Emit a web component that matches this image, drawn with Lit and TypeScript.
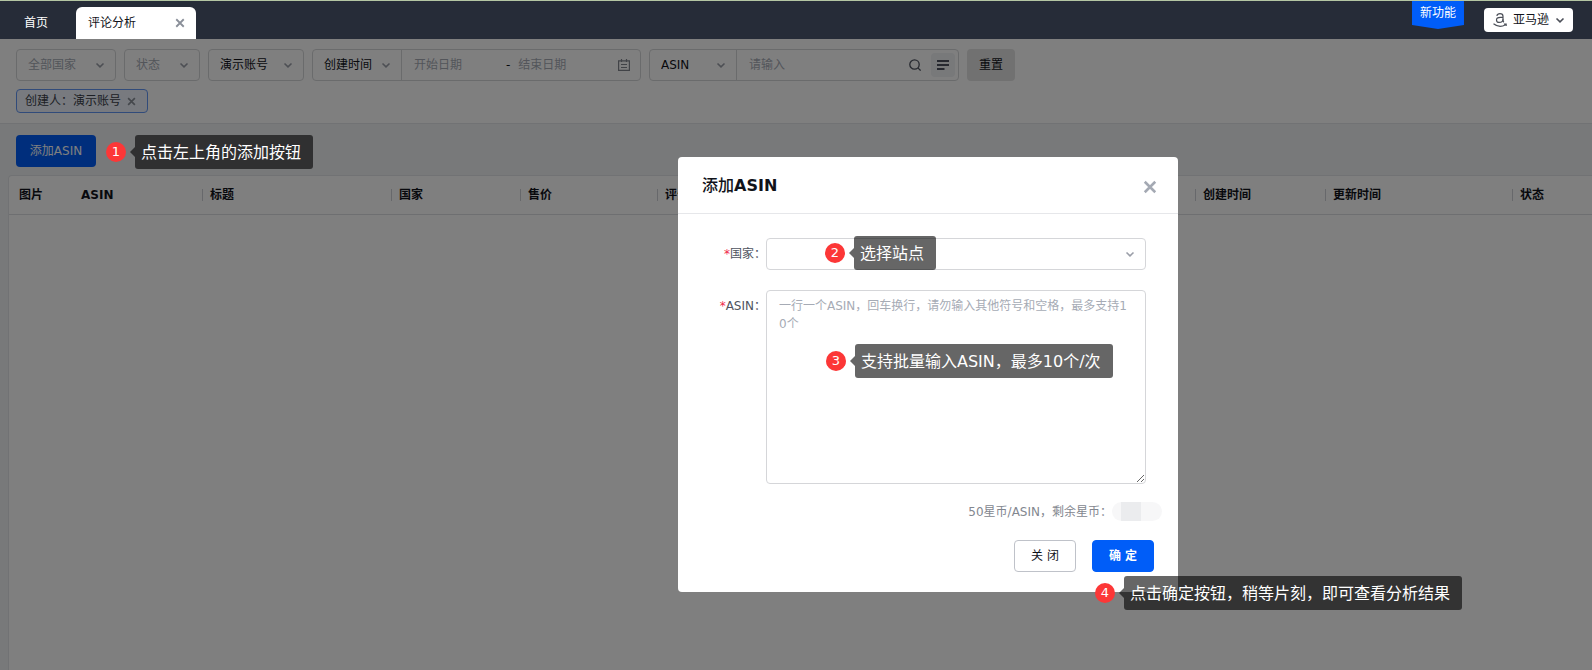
import { LitElement, html, css, svg } from "lit";
import { customElement, property } from "lit/decorators.js";

const chevron = html`<svg class="chevron" viewBox="0 0 10 10" aria-hidden="true">
  <path d="M1.5 3.5 5 6.8 8.5 3.5" fill="none" stroke="currentColor" stroke-width="1.6" />
</svg>`;

const cross = svg`<path d="M1.5 1.5 10.5 10.5M10.5 1.5 1.5 10.5" fill="none" stroke="currentColor" />`;

const columns = [
  { label: "图片", cls: "c-image plain" },
  { label: "ASIN", cls: "c-asin plain" },
  { label: "标题", cls: "c-title" },
  { label: "国家", cls: "c-country" },
  { label: "售价", cls: "c-price" },
  { label: "评分", cls: "c-rating" },
  { label: "创建时间", cls: "c-created" },
  { label: "更新时间", cls: "c-updated" },
  { label: "状态", cls: "c-status" },
];

@customElement("step-callout")
export class StepCallout extends LitElement {
  @property({ type: Number }) step = 1;

  static styles = css`
    :host {
      display: flex;
      align-items: center;
      gap: 4px;
      white-space: nowrap;
      color: #fff;
    }
    .number {
      width: 20px;
      height: 20px;
      border-radius: 50%;
      background: #fc3737;
      font-size: 13px;
      line-height: 20px;
      text-align: center;
    }
    .body {
      display: flex;
      align-items: center;
    }
    .arrow {
      width: 5px;
      height: 10px;
      background: rgba(0, 0, 0, 0.6);
      clip-path: polygon(0 50%, 100% 0, 100% 100%);
    }
    .text {
      padding: 2px 12px 0 6px;
      border-radius: 3px;
      background: rgba(0, 0, 0, 0.6);
      font-size: 16px;
      line-height: 32px;
    }
  `;

  render() {
    return html`
      <span class="number">${this.step}</span>
      <span class="body"><span class="arrow"></span><span class="text"><slot></slot></span></span>
    `;
  }
}

@customElement("app-root")
export class AppRoot extends LitElement {
  static styles = css`
    :host {
      display: flex;
      flex-direction: column;
      min-height: 100vh;
      font-family: "DejaVu Sans", "Noto Sans CJK SC", sans-serif;
      font-size: 12px;
      line-height: 18px;
      color: #11131a;
      overflow: hidden;
    }
    *,
    *::before {
      box-sizing: border-box;
    }
    button,
    input,
    select,
    textarea {
      margin: 0;
      padding: 0;
      border: 0;
      background: none;
      font: inherit;
      color: inherit;
      outline: none;
    }
    button,
    select {
      cursor: pointer;
    }
    select {
      appearance: none;
    }
    ::placeholder {
      color: #a6abb5;
      opacity: 1;
    }
    svg {
      display: block;
    }

    .topbar {
      display: flex;
      align-items: flex-end;
      height: 39px;
      border-top: 1px solid #b4c6a3;
      background: #262c38;
    }
    .home {
      padding: 0 28px 0 24px;
      line-height: 32px;
      color: #fff;
      text-decoration: none;
    }
    .tab {
      display: flex;
      align-items: center;
      justify-content: space-between;
      width: 120px;
      height: 32px;
      padding: 0 10px 0 12px;
      border-radius: 6px 6px 0 0;
      background: #fff;
    }
    .tab-close {
      color: #8a8f99;
    }
    .tab-close svg {
      width: 12px;
      height: 12px;
      padding: 1px;
      stroke-width: 2.2;
    }
    .top-actions {
      display: flex;
      align-self: flex-start;
      gap: 20px;
      margin-left: auto;
      padding-right: 19px;
    }
    .new-flag {
      width: 52px;
      height: 28px;
      background: #005df8;
      clip-path: polygon(0 0, 100% 0, 100% 86%, 50% 100%, 0 86%);
      color: #fff;
      line-height: 24px;
      text-align: center;
    }
    .market {
      display: flex;
      align-items: center;
      gap: 6px;
      height: 24px;
      margin-top: 7px;
      padding: 0 8px 0 9px;
      border-radius: 4px;
      background: #fff;
    }
    .market-logo {
      width: 14px;
      height: 14px;
      color: #4b4f58;
    }
    .market .chevron {
      width: 10px;
      height: 10px;
      color: #4b4f58;
    }

    .main {
      position: relative;
      flex: 1;
      display: flex;
      flex-direction: column;
      background: #f0f2f5;
    }
    .filters {
      display: flex;
      flex-direction: column;
      align-items: flex-start;
      gap: 8px;
      padding: 10px 16px;
      border-bottom: 1px solid #e2e4e8;
      background: #fff;
    }
    .filter-row {
      display: flex;
      gap: 8px;
    }
    .box {
      display: flex;
      height: 32px;
      border: 1px solid #d5d6d9;
      border-radius: 4px;
      background: #fff;
    }
    .pick {
      display: grid;
      align-items: center;
    }
    .pick select,
    .pick .chevron {
      grid-area: 1 / 1;
    }
    .pick select {
      width: 100%;
      height: 100%;
      padding: 0 11px;
    }
    .chevron {
      width: 10px;
      height: 10px;
      color: #9a9ea8;
    }
    .pick .chevron {
      justify-self: end;
      margin-right: 10px;
      pointer-events: none;
    }
    .muted {
      color: #a6abb5;
    }
    .w-country {
      width: 100px;
    }
    .w-status {
      width: 76px;
    }
    .w-account {
      width: 96px;
    }
    .w-time {
      width: 89px;
      border-right: 1px solid #d5d6d9;
    }
    .w-field {
      width: 87px;
      border-right: 1px solid #d5d6d9;
    }
    .dates,
    .search {
      display: flex;
      align-items: center;
    }
    .dates {
      width: 238px;
      gap: 8px;
      padding: 0 10px 0 12px;
    }
    .dates input {
      width: 84px;
    }
    .dates input + span + input {
      flex: 1;
      min-width: 0;
    }
    .calendar {
      width: 12px;
      height: 12px;
      color: #83878f;
    }
    .search {
      width: 221px;
      gap: 10px;
      padding: 0 3px 0 12px;
    }
    .search input {
      flex: 1;
      min-width: 0;
    }
    .search-icon {
      width: 12px;
      height: 12px;
      color: #4e5360;
    }
    .multi {
      display: grid;
      place-items: center;
      width: 24px;
      height: 24px;
      border-radius: 4px;
      background: #f0f2f5;
      color: #4e5360;
    }
    .multi svg {
      width: 12px;
      height: 12px;
    }
    .reset {
      width: 48px;
      height: 32px;
      border-radius: 4px;
      background: #e3e3e3;
    }
    .tag {
      display: flex;
      align-items: center;
      gap: 6px;
      height: 24px;
      padding: 0 11px 0 8px;
      border: 1px solid #6397f5;
      border-radius: 4px;
      background: #f0f5ff;
      color: #3b3f4a;
    }
    .tag-close {
      color: #8a8f99;
    }
    .tag-close svg {
      width: 9px;
      height: 9px;
      stroke-width: 2.2;
    }

    .toolbar {
      display: flex;
      align-items: flex-start;
      gap: 10px;
      padding: 11px 16px 6px;
    }
    .toolbar step-callout {
      position: relative;
      z-index: 2;
    }
    .add {
      width: 80px;
      height: 32px;
      border-radius: 4px;
      background: #005df8;
      color: #fff;
    }
    .list {
      flex: 1;
      margin-left: 8px;
      border: 1px solid #e2e4e8;
      border-width: 1px 0 0 1px;
      border-radius: 4px 0 0 0;
      background: #fff;
    }
    table {
      width: 100%;
      table-layout: fixed;
      border-collapse: collapse;
    }
    th {
      height: 38px;
      padding: 0 8px;
      border-bottom: 1px solid #dcdee2;
      background: linear-gradient(#cfd1d6, #cfd1d6) left center / 1px 12px no-repeat;
      font-weight: 700;
      text-align: left;
      white-space: nowrap;
    }
    th.plain {
      padding: 0 10px;
      background: none;
    }
    .c-image {
      width: 62px;
    }
    .c-asin {
      width: 131px;
    }
    .c-title {
      width: 189px;
    }
    .c-country {
      width: 129px;
    }
    .c-price {
      width: 137px;
    }
    .c-created {
      width: 130px;
    }
    .c-updated {
      width: 187px;
    }
    .c-status {
      width: 80px;
    }

    .overlay {
      position: absolute;
      inset: 0;
      z-index: 1;
      display: flex;
      align-items: flex-start;
      justify-content: center;
      padding: 118px 0 0 264px;
      background: rgba(0, 0, 0, 0.5);
    }
    .dialog {
      position: relative;
      width: 500px;
      border-radius: 4px;
      background: #fff;
    }
    .dialog-head {
      display: flex;
      align-items: center;
      justify-content: space-between;
      height: 57px;
      padding: 2px 21px 0 24px;
      border-bottom: 1px solid #e6e7ea;
    }
    h2 {
      margin: 0;
      font-size: 16px;
      line-height: 24px;
      font-weight: 500;
    }
    h2 b {
      font-weight: 700;
    }
    .dialog-close {
      padding-top: 2px;
      color: #a4a9b3;
    }
    .dialog-close svg {
      width: 14px;
      height: 14px;
      stroke-width: 2.2;
    }
    .form {
      display: grid;
      grid-template-columns: 64px 1fr;
      row-gap: 20px;
      padding: 24px 32px 0 24px;
    }
    .form label {
      line-height: 32px;
      text-align: right;
      white-space: nowrap;
      color: #4e5360;
    }
    .required {
      color: #f0284a;
    }
    .field {
      position: relative;
    }
    .field .pick {
      width: 100%;
    }
    .area {
      display: block;
      width: 100%;
      height: 194px;
      padding: 6px 12px;
      border: 1px solid #d5d6d9;
      border-radius: 4px;
      background: #fff;
      word-break: break-all;
      resize: vertical;
    }
    .at-select,
    .at-area,
    .at-confirm {
      position: absolute;
      z-index: 2;
    }
    .at-select {
      top: -2px;
      left: 59px;
    }
    .at-area {
      top: 54px;
      left: 60px;
    }
    .at-confirm {
      top: 419px;
      left: 417px;
    }
    .cost {
      display: flex;
      align-items: center;
      justify-content: flex-end;
      margin: 0;
      padding: 18px 16px 0 24px;
      color: #83878f;
    }
    .balance {
      width: 50px;
      height: 19px;
      border-radius: 10px;
      background: linear-gradient(90deg, #f7f7f8 18%, #ebecee 18%, #ebecee 58%, #f7f7f8 58%);
    }
    .dialog-foot {
      display: flex;
      justify-content: flex-end;
      gap: 16px;
      padding: 19px 24px 20px;
    }
    .btn {
      width: 62px;
      height: 32px;
      border: 1px solid #bfc2c9;
      border-radius: 4px;
    }
    .btn.primary {
      border-color: #005df8;
      background: #005df8;
      color: #fff;
      font-weight: 700;
    }
  `;

  render() {
    return html`
      <header class="topbar" lang="zh-CN">
        <a class="home" href="#">首页</a>
        <div class="tab">
          <span>评论分析</span>
          <button class="tab-close" aria-label="关闭标签"><svg viewBox="0 0 12 12">${cross}</svg></button>
        </div>
        <div class="top-actions">
          <span class="new-flag">新功能</span>
          <button class="market">
            <svg class="market-logo" viewBox="0 0 14 14" fill="none" stroke="currentColor" stroke-width="1.2">
              <path d="M3.800 2.800C4.200 1.300 5.400.7 7 .7c2 0 3 1 3 2.600V7.200c0 1 .3 1.500.9 2" />
              <path d="M10 4.400H7.300C4.900 4.400 3.500 5.200 3.500 6.900 3.500 8.400 4.500 9.400 6.100 9.400 8.400 9.400 10 8.200 10 6.200" />
              <path d="M.5 10.800C4.200 13.800 9 13.900 12.600 11.800M10.900 11h2.300v2" stroke-width="1.1" />
            </svg>
            <span>亚马逊</span>
            ${chevron}
          </button>
        </div>
      </header>

      <main class="main" lang="zh-CN">
        <section class="filters">
          <div class="filter-row">
            <div class="box pick w-country muted">
              <select aria-label="国家"><option>全部国家</option></select>${chevron}
            </div>
            <div class="box pick w-status muted">
              <select aria-label="状态"><option>状态</option></select>${chevron}
            </div>
            <div class="box pick w-account">
              <select aria-label="账号"><option>演示账号</option></select>${chevron}
            </div>
            <div class="box">
              <div class="pick w-time">
                <select aria-label="时间类型"><option>创建时间</option></select>${chevron}
              </div>
              <div class="dates">
                <input type="text" aria-label="开始日期" placeholder="开始日期" />
                <span>-</span>
                <input type="text" aria-label="结束日期" placeholder="结束日期" />
                <svg class="calendar" viewBox="0 0 12 12" fill="none" stroke="currentColor" stroke-width="1.2">
                  <path d="M.6 1.800h10.800v9.600H.6zM3.500 0v3M8.500 0v3M3 5.500h6M3 8.500h6" />
                </svg>
              </div>
            </div>
            <div class="box">
              <div class="pick w-field">
                <select aria-label="搜索字段"><option>ASIN</option></select>${chevron}
              </div>
              <div class="search">
                <input type="text" aria-label="搜索内容" placeholder="请输入" />
                <button aria-label="搜索">
                  <svg class="search-icon" viewBox="0 0 12 12" fill="none" stroke="currentColor" stroke-width="1.3">
                    <circle cx="5.500" cy="5.500" r="4.700" />
                    <path d="m8.900 8.900 2.700 2.700" />
                  </svg>
                </button>
                <button class="multi" aria-label="批量搜索">
                  <svg viewBox="0 0 12 12" fill="none" stroke="currentColor" stroke-width="2">
                    <path d="M0 2h12M0 6h12M0 10h7.500" />
                  </svg>
                </button>
              </div>
            </div>
            <button class="reset">重置</button>
          </div>
          <div class="tag">
            <span>创建人：演示账号</span>
            <button class="tag-close" aria-label="移除筛选"><svg viewBox="0 0 12 12">${cross}</svg></button>
          </div>
        </section>

        <div class="toolbar">
          <button class="add">添加ASIN</button>
          <step-callout .step=${1}>点击左上角的添加按钮</step-callout>
        </div>

        <section class="list">
          <table>
            <thead>
              <tr>
                ${columns.map((c) => html`<th scope="col" class=${c.cls}>${c.label}</th>`)}
              </tr>
            </thead>
          </table>
        </section>

        <div class="overlay">
          <div class="dialog" role="dialog" aria-labelledby="dialog-title">
            <div class="dialog-head">
              <h2 id="dialog-title">添加<b>ASIN</b></h2>
              <button class="dialog-close" aria-label="关闭"><svg viewBox="0 0 12 12">${cross}</svg></button>
            </div>
            <div class="form">
              <label for="country"><span class="required">*</span>国家：</label>
              <div class="field">
                <div class="box pick">
                  <select id="country"><option></option></select>${chevron}
                </div>
                <step-callout class="at-select" .step=${2}>选择站点</step-callout>
              </div>
              <label for="asin"><span class="required">*</span>ASIN：</label>
              <div class="field">
                <textarea
                  id="asin"
                  class="area"
                  placeholder="一行一个ASIN，回车换行，请勿输入其他符号和空格，最多支持10个"
                ></textarea>
                <step-callout class="at-area" .step=${3}>支持批量输入ASIN，最多10个/次</step-callout>
              </div>
            </div>
            <p class="cost">50星币/ASIN，剩余星币：<span class="balance"></span></p>
            <div class="dialog-foot">
              <button class="btn">关 闭</button>
              <button class="btn primary">确 定</button>
            </div>
            <step-callout class="at-confirm" .step=${4}>点击确定按钮，稍等片刻，即可查看分析结果</step-callout>
          </div>
        </div>
      </main>
    `;
  }
}
